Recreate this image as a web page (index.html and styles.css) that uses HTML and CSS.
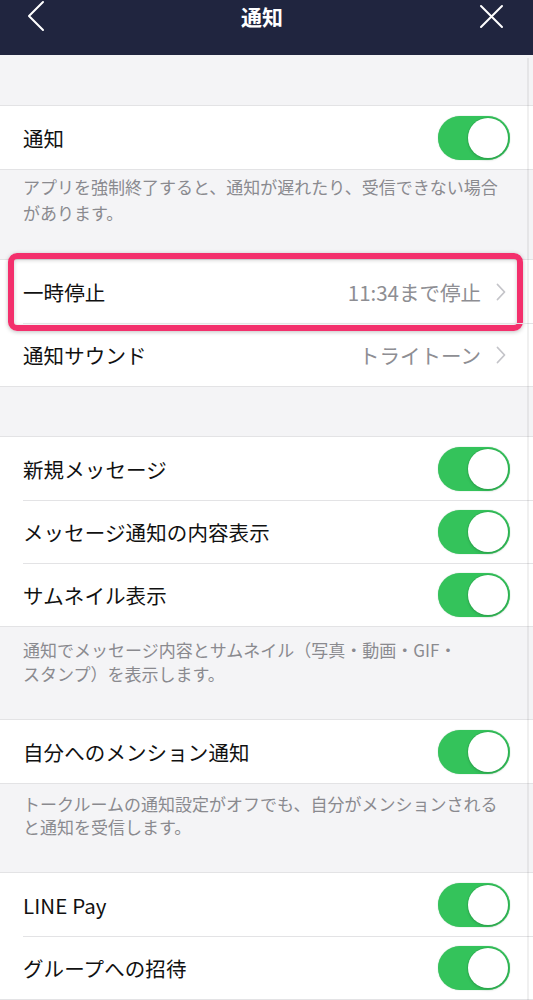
FILE: index.html
```html
<!DOCTYPE html>
<html lang="ja">
<head>
    <meta charset="UTF-8">
    <meta name="viewport" content="width=device-width, initial-scale=1.0">
    <title>通知</title>
    <link rel="stylesheet" href="styles.css">
</head>
<body>
    <div class="screen">
        <div class="nav-bar">
            <svg class="nav-icon nav-back" width="20" height="32" viewBox="0 0 20 32" fill="none">
                <path d="M17 2L3 16L17 30" stroke="currentColor" stroke-width="2" stroke-linecap="round" stroke-linejoin="round"/>
            </svg>
            <div class="nav-title">通知</div>
            <svg class="nav-icon nav-close" width="26" height="26" viewBox="0 0 26 26" fill="none">
                <path d="M3 3L24 24M24 3L3 24" stroke="currentColor" stroke-width="2" stroke-linecap="round"/>
            </svg>
        </div>

        <div class="settings">
            <div class="spacer"></div>
            <div class="group">
                <div class="row">
                    <span class="row-label">通知</span>
                    <span class="toggle"><span class="knob"></span></span>
                </div>
            </div>
            <div class="note note-1">アプリを強制終了すると、通知が遅れたり、受信できない場合<br>があります。</div>

            <div class="group">
                <div class="row">
                    <span class="row-label">一時停止</span>
                    <span class="row-value">11:34まで停止</span>
                    <svg class="chevron" width="10" height="18" viewBox="0 0 10 18" fill="none">
                        <path d="M1.5 1.5L8.5 9L1.5 16.5" stroke="currentColor" stroke-width="1.8" stroke-linecap="round" stroke-linejoin="round"/>
                    </svg>
                    <div class="highlight"></div>
                </div>
                <div class="row">
                    <span class="row-label">通知サウンド</span>
                    <span class="row-value">トライトーン</span>
                    <svg class="chevron" width="10" height="18" viewBox="0 0 10 18" fill="none">
                        <path d="M1.5 1.5L8.5 9L1.5 16.5" stroke="currentColor" stroke-width="1.8" stroke-linecap="round" stroke-linejoin="round"/>
                    </svg>
                </div>
            </div>

            <div class="spacer spacer-short"></div>
            <div class="group">
                <div class="row">
                    <span class="row-label">新規メッセージ</span>
                    <span class="toggle"><span class="knob"></span></span>
                </div>
                <div class="row">
                    <span class="row-label">メッセージ通知の内容表示</span>
                    <span class="toggle"><span class="knob"></span></span>
                </div>
                <div class="row">
                    <span class="row-label">サムネイル表示</span>
                    <span class="toggle"><span class="knob"></span></span>
                </div>
            </div>
            <div class="note note-2">通知でメッセージ内容とサムネイル（写真・動画・GIF・<br>スタンプ）を表示します。</div>

            <div class="group">
                <div class="row">
                    <span class="row-label">自分へのメンション通知</span>
                    <span class="toggle"><span class="knob"></span></span>
                </div>
            </div>
            <div class="note note-3">トークルームの通知設定がオフでも、自分がメンションされる<br>と通知を受信します。</div>

            <div class="group">
                <div class="row">
                    <span class="row-label">LINE Pay</span>
                    <span class="toggle"><span class="knob"></span></span>
                </div>
                <div class="row">
                    <span class="row-label">グループへの招待</span>
                    <span class="toggle"><span class="knob"></span></span>
                </div>
            </div>
            <div class="scroll-line"></div>
        </div>
    </div>
</body>
</html>
```

FILE: styles.css
```css
* {
    margin: 0;
    padding: 0;
    box-sizing: border-box;
}

body {
    font-family: "Noto Sans CJK JP", "Noto Sans", sans-serif;
    background: #f4f4f6;
    color: #111111;
    width: 533px;
    height: 1000px;
    overflow: hidden;
}

.screen {
    display: flex;
    flex-direction: column;
}

.nav-bar {
    height: 55px;
    background: #20253f;
    color: #ffffff;
    display: flex;
    align-items: flex-start;
    justify-content: space-between;
    padding: 0 29px 0 26px;
}

.nav-icon {
    flex-shrink: 0;
}

.nav-close {
    margin-top: 3px;
}

.nav-title {
    font-size: 21px;
    font-weight: 700;
    line-height: 33px;
}

.settings {
    position: relative;
    display: flex;
    flex-direction: column;
}

.spacer {
    height: 50px;
}

.spacer-short {
    height: 49px;
}

.group {
    background: #ffffff;
    border-top: 1px solid #e3e3e5;
    border-bottom: 1px solid #e3e3e5;
}

.row {
    position: relative;
    display: flex;
    align-items: center;
    height: 63px;
    padding: 0 23px;
}

.row + .row::before {
    content: "";
    position: absolute;
    top: 0;
    left: 23px;
    right: 0;
    border-top: 1px solid #e3e3e5;
}

.row-label {
    flex: 1;
    font-size: 20.5px;
    letter-spacing: 0.1px;
}

.row-value {
    font-size: 20.5px;
    color: #8e8e93;
    margin-right: 15px;
}

.chevron {
    color: #c4c4c9;
    margin-right: 4px;
}

.toggle {
    position: relative;
    width: 72px;
    height: 44px;
    border-radius: 22px;
    background: #34c35b;
    box-shadow: 0 0 1px rgba(30, 140, 60, 0.6);
}

.knob {
    position: absolute;
    top: 2px;
    right: 2px;
    width: 40px;
    height: 40px;
    border-radius: 50%;
    background: #ffffff;
    box-shadow: 0 0 0 1px rgba(40, 150, 70, 0.35), 0 2px 3px rgba(0, 0, 0, 0.12);
}

.note {
    padding: 0 23px;
    font-size: 17px;
    line-height: 24px;
    color: #8a8a8f;
}

.note-1 {
    height: 89px;
    padding-top: 4px;
    line-height: 26px;
}

.note-2 {
    height: 92px;
    padding-top: 11px;
}

.note-3 {
    height: 88px;
    padding-top: 8px;
    line-height: 23px;
}

.highlight {
    position: absolute;
    top: -7px;
    bottom: -8px;
    left: 8px;
    right: 10px;
    border: 6px solid #f3306c;
    border-radius: 9px;
    box-shadow: 0 1px 4px rgba(0, 0, 0, 0.25), inset 0 1px 4px rgba(0, 0, 0, 0.2);
}

.scroll-line {
    position: absolute;
    top: 3px;
    bottom: 0;
    right: 4px;
    width: 2px;
    background: rgba(0, 0, 0, 0.06);
}
```
